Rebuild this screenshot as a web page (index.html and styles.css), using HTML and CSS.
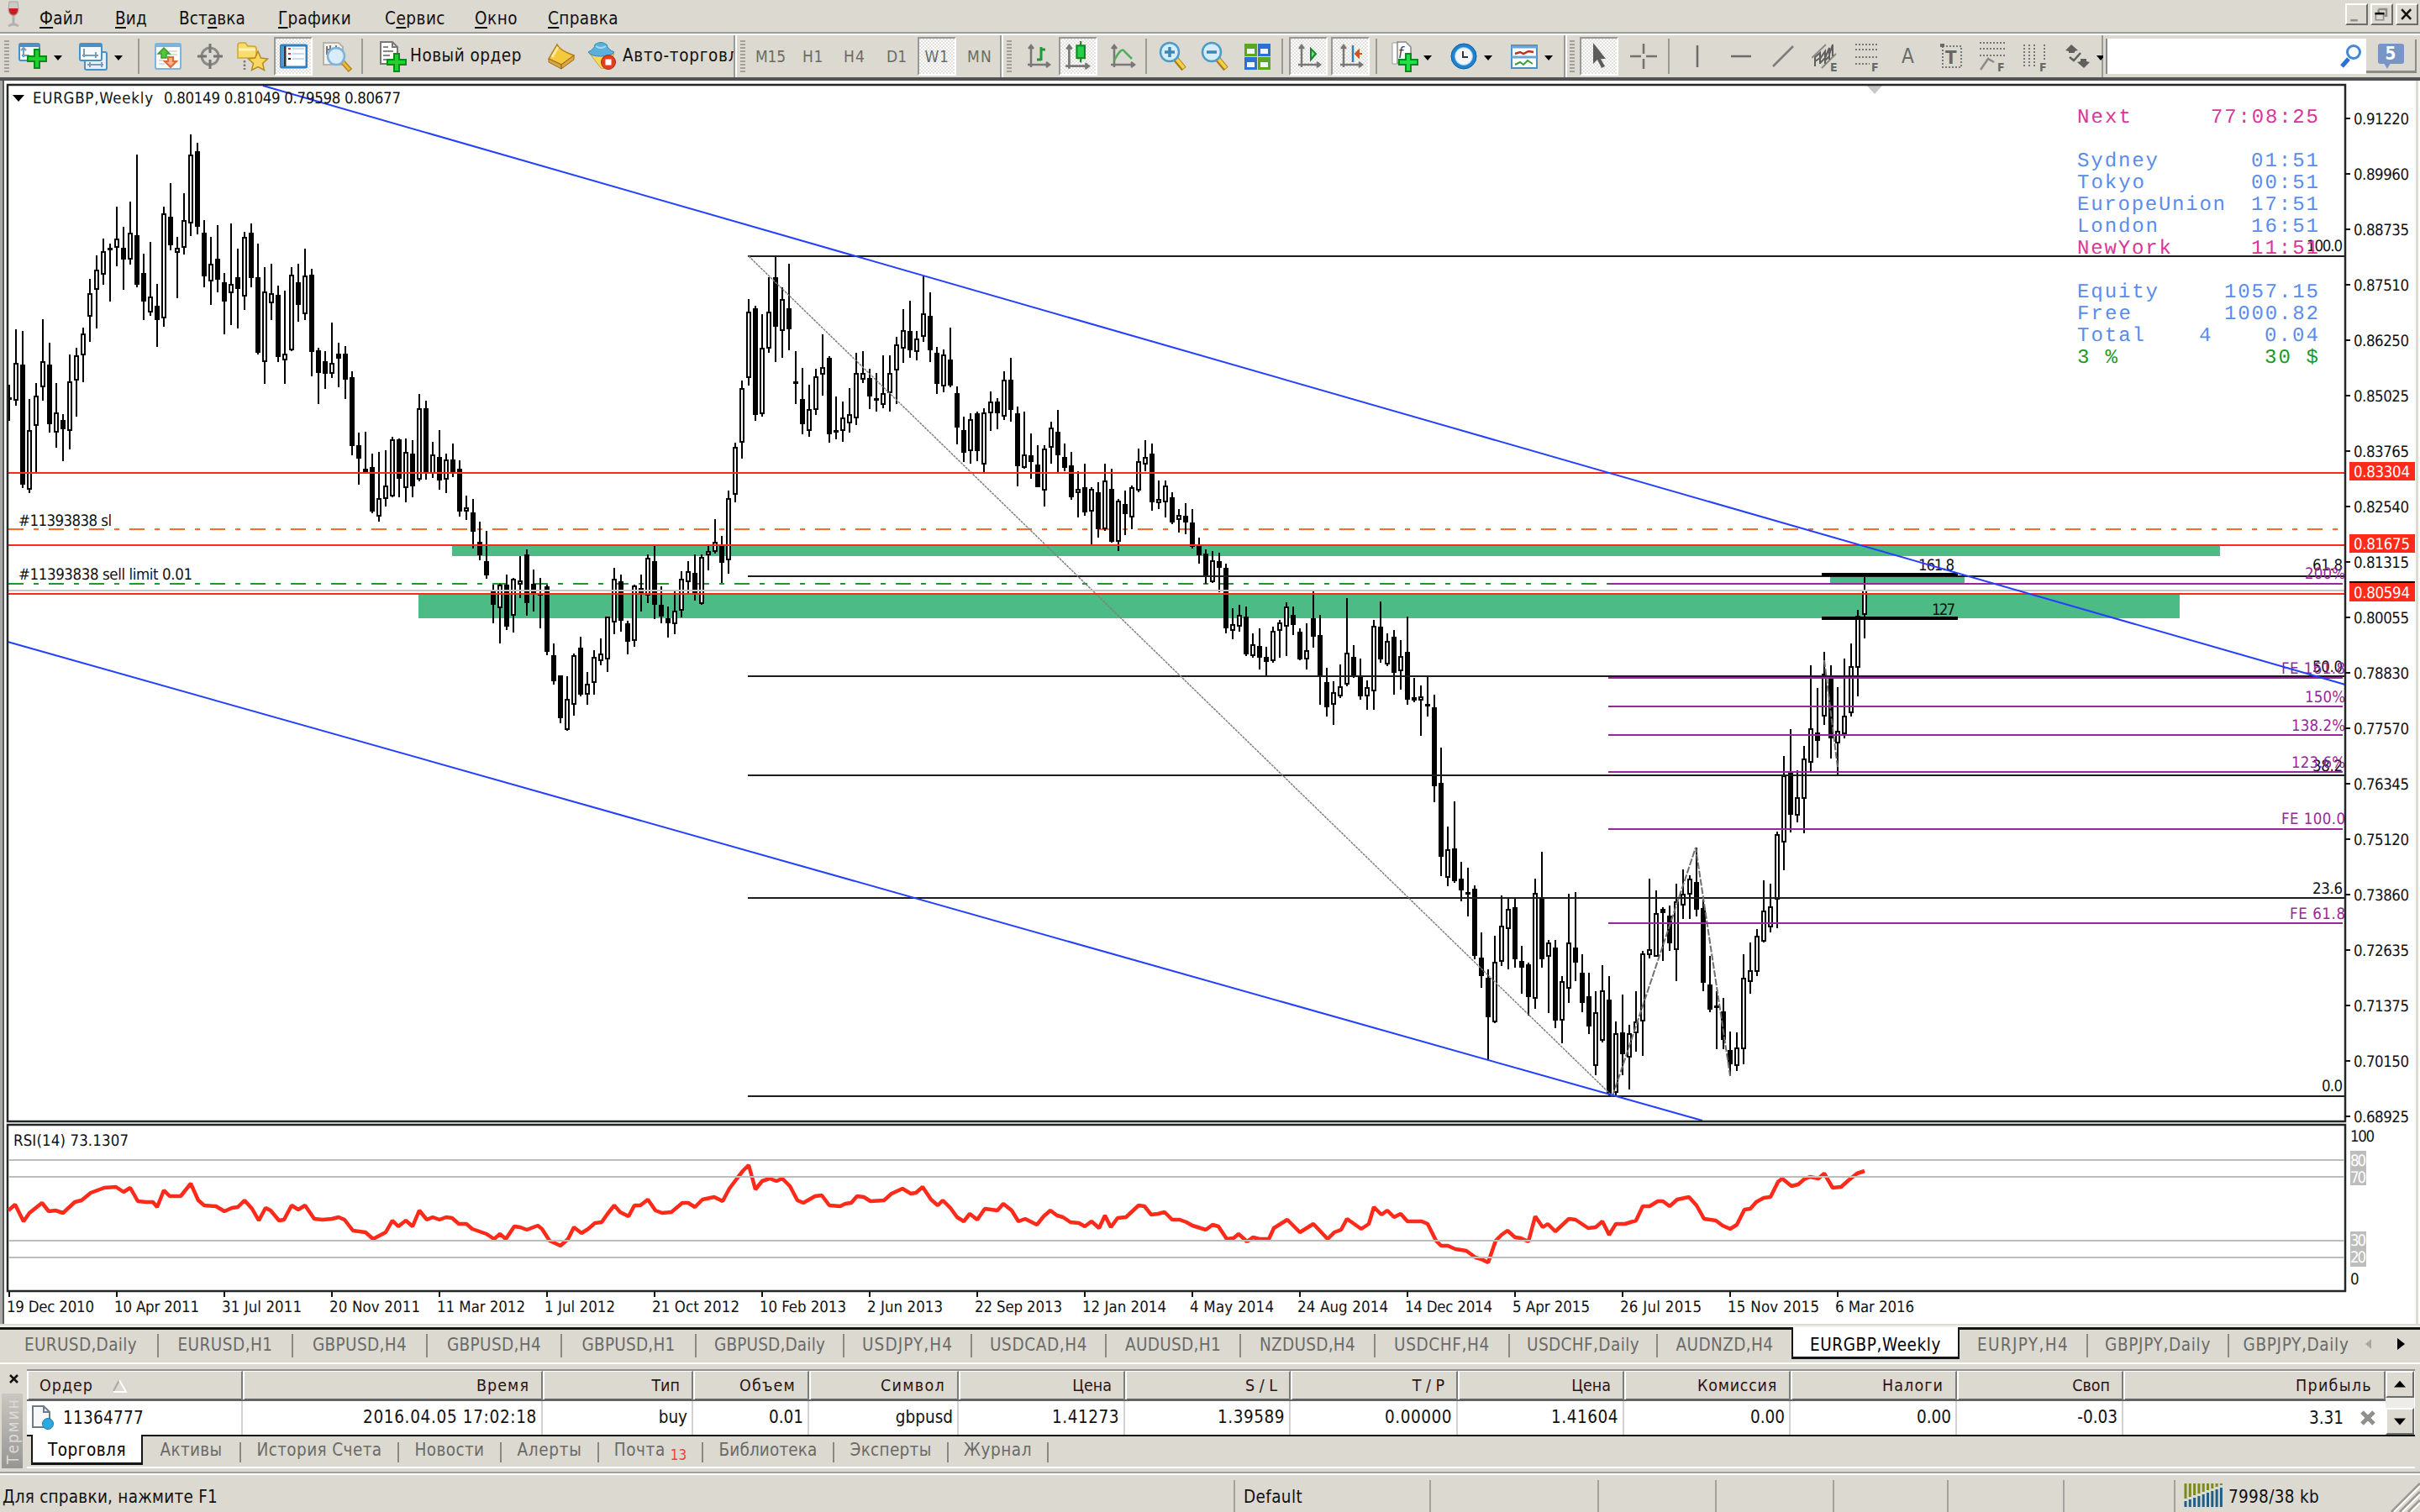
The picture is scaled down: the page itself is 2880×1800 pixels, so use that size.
FILE: index.html
```html
<!DOCTYPE html>
<html lang="ru">
<head>
  <meta charset="UTF-8" />
  <title>EURGBP,Weekly</title>
  <link rel="stylesheet" href="styles.css">
</head>
<body>

  <!-- Меню -->
  <div class="menubar">
    <svg class="logo" viewBox="0 0 20 34"><path d="M4 2h10l1 9q0 7-6 8q-6-1-6-8z" fill="#c9c9c7" stroke="#a5a5a3"/><path d="M3.500 10h11q0 7-5.500 8q-5.500-1-5.500-8z" fill="#c81e1e"/><path d="M9 19v10M3 31q6-4 12 0" stroke="#b0b0ae" stroke-width="3" fill="none"/></svg>
    <div class="menu">
      <span data-w="52"><u>Ф</u>айл</span>
      <span data-w="38"><u>В</u>ид</span>
      <span data-w="79">Вст<u>а</u>вка</span>
      <span data-w="87"><u>Г</u>рафики</span>
      <span data-w="72">С<u>е</u>рвис</span>
      <span data-w="51"><u>О</u>кно</span>
      <span data-w="84"><u>С</u>правка</span>
    </div>
    <div class="winbtns">
      <svg viewBox="0 0 27 26"><path d="M5 20h10v3H5z" fill="#8d8d8a"/></svg>
      <svg viewBox="0 0 27 26"><path d="M9 6h11v9h-3M9 6v5" fill="none" stroke="#8d8d8a" stroke-width="3"/><path d="M5 12h11v9H5z" fill="none" stroke="#8d8d8a" stroke-width="2"/><path d="M4 12h13" stroke="#000" stroke-width="3"/></svg>
      <svg viewBox="0 0 27 26"><path d="M6 6l13 14M19 6L6 20" stroke="#111" stroke-width="3"/></svg>
    </div>
  </div>

  <!-- Панели инструментов -->
  <div class="toolbars">
    <div class="tb tb-standard">
      <i class="grip"></i>
      <svg width="36" height="36" viewBox="0 0 36 36"><rect x="1" y="3" width="24" height="20" rx="2" fill="#f4f9fd" stroke="#4a8fc6" stroke-width="2"/><path d="M1 5h24" stroke="#4a8fc6" stroke-width="4"/><path d="M6 9v10M3 11l3-3 3 3M4 17h9" stroke="#7a9cb8" stroke-width="2" fill="none"/><path d="M19 10h6v8h8v6h-8v8h-6v-8h-8v-6h8z" fill="#1fd02f" stroke="#0a8c1a" stroke-width="2"/></svg>
      <i class="caret"></i>
      <svg width="36" height="36" viewBox="0 0 36 36"><rect x="7" y="13" width="26" height="21" rx="2" fill="#e6f0f8" stroke="#4a8fc6" stroke-width="2"/><rect x="1" y="3" width="26" height="20" rx="2" fill="#f6fafd" stroke="#4a8fc6" stroke-width="2"/><path d="M1 5h26" stroke="#4a8fc6" stroke-width="4"/><path d="M6 9v10M4 17h19M20 13v7M10 28h19M13 25v6M27 25v6" stroke="#7a9cb8" stroke-width="2"/></svg>
      <i class="caret"></i>
      <i class="sep"></i>
      <svg width="33" height="36" viewBox="0 0 33 36"><rect x="1" y="3" width="30" height="30" rx="2" fill="#fdfdfd" stroke="#79b4e2" stroke-width="2"/><path d="M1 5h30" stroke="#79b4e2" stroke-width="4"/><path d="M17 12h10M17 16h10M5 27h7M5 23h7" stroke="#ddd" stroke-width="2"/><path d="M11 8l7 7h-4v5H8v-5H4z" fill="#55c43c" stroke="#3a9a28" stroke-width="1.500"/><path d="M19 31l7-7h-4v-5h-6v5h-4z" fill="#fbb08c" stroke="#dd6a3a" stroke-width="2"/></svg>
      <svg width="33" height="36" viewBox="0 0 33 36"><circle cx="15" cy="18" r="10" fill="none" stroke="#8a8a88" stroke-width="3"/><path d="M15 3v11M15 22v11M0 18h11M19 18h11" stroke="#757573" stroke-width="3"/></svg>
      <svg width="38" height="38" viewBox="0 0 38 38"><path d="M1 6q0-3 3-3h6l3 4h7q3 0 3 3v11H1z" fill="#f7dc6e" stroke="#cfa52a" stroke-width="1.500"/><path d="M2 11h20" stroke="#fff3b5" stroke-width="3"/><path d="M9 24v11" stroke="#777" stroke-width="2.500" stroke-dasharray="2.500 2"/><path d="M25 13l3.500 8 8 1-6 5.500 2 8-7.500-4-7.500 4 2-8-6-5.500 8-1z" fill="#f8d860" stroke="#b98a1c" stroke-width="1.500"/></svg>
      <span class="pressed"><svg width="33" height="36" viewBox="0 0 33 36"><rect x="1" y="5" width="31" height="26" rx="2" fill="#fff" stroke="#2a82c8" stroke-width="3"/><path d="M6 6v24" stroke="#333" stroke-width="3"/><path d="M3 6v24" stroke="#4a9ad8" stroke-width="3"/><path d="M10 9h3M10 15h3" stroke="#e33" stroke-width="2"/><path d="M10 21h3" stroke="#111" stroke-width="2"/><path d="M15 9h14M15 15h14M15 21h14" stroke="#c8dcf8" stroke-width="2"/></svg></span>
      <svg width="38" height="40" viewBox="0 0 38 40"><path d="M2 4h18l5 5v21H2z" fill="#f3f2ee" stroke="#b5b3aa" stroke-width="2"/><path d="M6 8v10M10 7v8M17 7v6M5 12h4M17 10h4" stroke="#777" stroke-width="2"/><path d="M25 27l9 10" stroke="#b8841a" stroke-width="6"/><path d="M25 27l8 9" stroke="#e8b83a" stroke-width="3"/><circle cx="17" cy="20" r="10" fill="#d5ebfa" fill-opacity=".9" stroke="#7fb2d8" stroke-width="2.500"/></svg>
      <i class="sep"></i>
      <svg width="37" height="40" viewBox="0 0 37 40"><path d="M2 3h14l6 6v20H2z" fill="#fff" stroke="#777" stroke-width="2"/><path d="M16 3v6h6" fill="none" stroke="#777" stroke-width="2"/><path d="M5 9h6M5 14h12M5 19h8M5 24h5" stroke="#888" stroke-width="2"/><path d="M18 17h6v7h8v6h-8v8h-6v-8h-8v-6h8z" fill="#1fd02f" stroke="#0a8c1a" stroke-width="2"/></svg>
      <span class="tb-text" data-w="133">Новый ордер</span>
      <svg width="36" height="36" viewBox="0 0 36 36"><path d="M2 21L12 4q3 7 20 13L17 28z" fill="#f4c93c" stroke="#b4811a" stroke-width="1.500"/><path d="M2 21l15 7v5L2 25zM17 28l15-11v5L17 33z" fill="#d9a548" stroke="#a06c1a"/><path d="M13 7L6 19" stroke="#fde9a8" stroke-width="3"/></svg>
      <svg width="36" height="38" viewBox="0 0 36 38"><path d="M3 16h29l-10 17q-4 1-6 0z" fill="#f5d95a" stroke="#c2a03a"/><path d="M1 14q8-4 8-9q7-5 14 0q1 6 9 9q-3 5-16 5q-12 0-15-5z" fill="#5bb1dc" stroke="#2f86b4"/><path d="M10 7q6 4 12 0" stroke="#a6dbf2" stroke-width="2" fill="none"/><circle cx="25" cy="26" r="8.500" fill="#e2401e" stroke="#b52312"/><rect x="21.500" y="22.500" width="7" height="7" fill="#fff"/></svg>
      <span class="tb-text" data-w="150">Авто-торговля</span>
    </div>

    <div class="tb tb-periods">
      <i class="grip"></i>
      <span class="tf" data-w="36">M15</span>
      <span class="tf" data-w="25">H1</span>
      <span class="tf" data-w="26">H4</span>
      <span class="tf" data-w="24">D1</span>
      <span class="pressed"><span class="tf" data-w="29">W1</span></span>
      <span class="tf" data-w="30">MN</span>
    </div>

    <div class="tb tb-charts">
      <i class="grip"></i>
      <svg width="28" height="32" viewBox="0 0 28 32"><path d="M4 3v26M0 26h26M1 7l3-4 3 4M22 23l4 3-4 3" stroke="#777" stroke-width="2.500" fill="none"/><path d="M16 5v16M11 20h5M16 8h5" stroke="#1c9a34" stroke-width="3"/></svg>
      <span class="pressed"><svg width="30" height="36" viewBox="0 0 28 34"><path d="M4 5v26M0 28h26M1 9l3-4 3 4M22 25l4 3-4 3" stroke="#777" stroke-width="2.500" fill="none"/><path d="M17 0v24" stroke="#0d8a22" stroke-width="2"/><rect x="12.500" y="5" width="9" height="14" fill="#27cf4b" stroke="#0d8a22" stroke-width="2"/></svg></span>
      <svg width="30" height="32" viewBox="0 0 30 32"><path d="M4 3v26M0 26h28M1 7l3-4 3 4M24 23l4 3-4 3" stroke="#777" stroke-width="2.500" fill="none"/><path d="M4 21Q13 4 16 10l9 9" stroke="#52ae5c" stroke-width="2.500" fill="none"/></svg>
      <i class="sep"></i>
      <svg width="36" height="36" viewBox="0 0 36 36"><path d="M20 21l10 12" stroke="#a87a18" stroke-width="7"/><path d="M20 20l10 12" stroke="#f3d046" stroke-width="4"/><circle cx="13" cy="13" r="11" fill="#d3edfb" stroke="#4d9bcb" stroke-width="2.500"/><path d="M7 13h12M13 7v12" stroke="#3f86b4" stroke-width="3.500"/></svg>
      <svg width="36" height="36" viewBox="0 0 36 36"><path d="M20 21l10 12" stroke="#a87a18" stroke-width="7"/><path d="M20 20l10 12" stroke="#f3d046" stroke-width="4"/><circle cx="13" cy="13" r="11" fill="#d3edfb" stroke="#4d9bcb" stroke-width="2.500"/><path d="M7 13h12" stroke="#3f86b4" stroke-width="3.500"/></svg>
      <svg width="34" height="34" viewBox="0 0 34 34"><path d="M1 2h15v15H1zM17 18h15v15H17z" fill="#5aa81e"/><path d="M17 2h15v15H17zM1 18h15v15H1z" fill="#2d6fd8"/><path d="M4 8h9v6H4zM20 8h9v6h-9zM4 24h9v6H4zM20 24h9v6h-9z" fill="#eef5fb"/></svg>
      <i class="sep"></i>
      <span class="pressed"><svg class="shift" width="30" height="32" viewBox="0 0 28 32"><path d="M4 3v26M0 26h26M1 7l3-4 3 4M22 23l4 3-4 3" stroke="#777" stroke-width="2.500" fill="none"/><path d="M15 7l6 6-6 7z" fill="#6fdc86" stroke="#128a2a" stroke-width="2"/></svg></span>
      <span class="pressed"><svg class="shift" width="30" height="32" viewBox="0 0 28 32"><path d="M4 3v26M0 26h26M1 7l3-4 3 4M22 23l4 3-4 3" stroke="#777" stroke-width="2.500" fill="none"/><path d="M15 3v20" stroke="#2e80b8" stroke-width="2.500"/><path d="M26 13h-7M22 9l-4 4 4 4z" fill="#d6511a" stroke="#d6511a" stroke-width="2"/></svg></span>
      <i class="sep"></i>
      <svg width="36" height="40" viewBox="0 0 36 40"><path d="M1 4h14v25H1z" fill="#fff" stroke="#999"/><path d="M7 3h10l6 6v19H7z" fill="#fff" stroke="#888" stroke-width="1.500"/><text x="8" y="22" font-size="18" font-style="italic" fill="#444">f</text><path d="M17 17h6v7h8v6h-8v8h-6v-8h-8v-6h8z" fill="#1fe04a" stroke="#0a8c1a" stroke-width="2"/></svg>
      <i class="caret"></i>
      <svg width="34" height="36" viewBox="0 0 34 36"><circle cx="16" cy="18" r="15" fill="#1d83d2" stroke="#0f5a9c"/><circle cx="16" cy="18" r="10.500" fill="#f2f6fa" stroke="#9cc8ea"/><path d="M15 12v7h6" stroke="#333" stroke-width="2" fill="none"/></svg>
      <i class="caret"></i>
      <svg width="34" height="34" viewBox="0 0 34 34"><rect x="1" y="4" width="30" height="27" fill="#fff" stroke="#4a8fc6" stroke-width="2"/><path d="M1 6h30M1 18h30" stroke="#6ba6d6" stroke-width="3"/><path d="M5 14l6-2 4 2 6-3 6 1" stroke="#b5361a" stroke-width="2.500" fill="none"/><path d="M5 27l6-3 4 3 5-5 6 4" stroke="#3aa03c" stroke-width="2" fill="none"/></svg>
      <i class="caret"></i>
    </div>

    <div class="tb tb-lines">
      <i class="grip"></i>
      <span class="pressed"><svg width="24" height="34" viewBox="0 0 24 34"><path d="M5 1v25l5-5 5 10 4-2-5-9h6z" fill="#5c5c5a"/></svg></span>
      <svg width="32" height="34" viewBox="0 0 32 34"><path d="M16 2v12M16 20v12M0 17h13M19 17h13" stroke="#72726f" stroke-width="2.500"/></svg>
      <i class="sep"></i>
      <svg width="20" height="30" viewBox="0 0 20 30"><path d="M10 2v26" stroke="#6a6a68" stroke-width="2.500"/></svg>
      <svg width="26" height="30" viewBox="0 0 26 30"><path d="M0 15h24" stroke="#6a6a68" stroke-width="2.500"/></svg>
      <svg width="26" height="30" viewBox="0 0 26 30"><path d="M1 27L25 3" stroke="#7c7c7a" stroke-width="2.500"/></svg>
      <svg class="letter" width="32" height="38" viewBox="0 0 32 38"><path d="M0 21L17 5M12 33L29 16" stroke="#8a8a88" stroke-width="2"/><path d="M4 31V20l6-5v13M10 22l6-9v15M16 21l5-12v14M21 17l4-12v14M4 25l6-4M10 27l6-6M16 24l5-5" stroke="#5f5f5d" stroke-width="2" fill="none"/><text x="22" y="37">E</text></svg>
      <svg class="letter" width="32" height="38" viewBox="0 0 32 38"><path d="M1 5h27M1 11h27M1 20h27M1 28h17" stroke="#777775" stroke-width="2" stroke-dasharray="2 2"/><text x="20" y="37">F</text></svg>
      <span class="glyph">A</span>
      <svg class="letter" width="28" height="32" viewBox="0 0 28 32"><rect x="3" y="4" width="22" height="25" fill="none" stroke="#777775" stroke-width="2" stroke-dasharray="2 2"/><text x="6" y="25" class="big">T</text><path d="M0 1h5v4H0z" fill="#686866"/></svg>
      <svg class="letter" width="32" height="38" viewBox="0 0 32 38"><path d="M0 3h31M0 10h31M0 18h31" stroke="#777775" stroke-width="2" stroke-dasharray="2 2"/><path d="M1 35L10 22l7 4" stroke="#8a8a88" stroke-width="2.500" fill="none"/><text x="21" y="37">F</text></svg>
      <svg class="letter" width="32" height="38" viewBox="0 0 32 38"><path d="M2 5v26M8 5v26M14 5v26M26 5v20" stroke="#777775" stroke-width="2" stroke-dasharray="2 2"/><text x="20" y="37">F</text></svg>
      <svg width="32" height="34" viewBox="0 0 32 34"><path d="M7 3l8 7-4 1v2H4v-2l-4-1zM22 31l-8-7 4-1v-3h7v3l4 1z" fill="#5f5f5d"/><path d="M5 18l5 4 8-9" stroke="#5f5f5d" stroke-width="2.500" fill="none"/></svg>
      <i class="caret"></i>
    </div>

    <div class="search">
      <div class="search-box"><svg width="28" height="30" viewBox="0 0 28 30"><path d="M11 18L3 27" stroke="#2b6fd0" stroke-width="5"/><circle cx="17" cy="10" r="7.500" fill="#fff" stroke="#4287dd" stroke-width="3"/></svg></div>
      <div class="chat-btn"><span class="bubble">5</span></div>
    </div>
  </div>

  <!-- График -->
  <svg id="chart" class="chart" viewBox="0 96 2880 1482" text-rendering="geometricPrecision"></svg>

  <!-- Вкладки графиков -->
  <div class="chart-tabs">
    <span><b data-w="134">EURUSD,Daily</b></span>
    <span><b data-w="113">EURUSD,H1</b></span>
    <span><b data-w="112">GBPUSD,H4</b></span>
    <span><b data-w="112">GBPUSD,H4</b></span>
    <span><b data-w="111">GBPUSD,H1</b></span>
    <span><b data-w="132">GBPUSD,Daily</b></span>
    <span><b data-w="108">USDJPY,H4</b></span>
    <span><b data-w="116">USDCAD,H4</b></span>
    <span><b data-w="114">AUDUSD,H1</b></span>
    <span><b data-w="114">NZDUSD,H4</b></span>
    <span><b data-w="114">USDCHF,H4</b></span>
    <span><b data-w="134">USDCHF,Daily</b></span>
    <span class="last"><b data-w="116">AUDNZD,H4</b></span>
    <span class="active"><b data-w="156">EURGBP,Weekly</b></span>
    <span><b data-w="109">EURJPY,H4</b></span>
    <span><b data-w="126">GBPJPY,Daily</b></span>
    <span class="last"><b data-w="126">GBPJPY,Daily</b></span>
    <svg width="60" height="20" viewBox="0 0 60 20"><path d="M10 4v12l-7-6z" fill="#a9a7a0"/><path d="M41 3v14l9-7z" fill="#000"/></svg>
  </div>

  <!-- Терминал -->
  <div class="terminal">
    <div class="side">
      <svg width="12" height="12" viewBox="0 0 12 12"><path d="M1 1l9 9M10 1l-9 9" stroke="#111" stroke-width="2.500"/></svg>
      <div class="side-title"><span>Термин</span></div>
    </div>
    <div class="term-main">
      <div class="table">
        <div class="thead">
          <span class="left"><b data-w="64">Ордер</b> <svg width="20" height="18" viewBox="0 0 20 18"><path d="M8 2L1 15" stroke="#aaa8a0" stroke-width="2"/><path d="M8 2l8 14H1" fill="none" stroke="#fff" stroke-width="2"/></svg></span>
          <span data-w="63">Время</span><span>Тип</span><span data-w="67">Объем</span><span data-w="77">Символ</span><span>Цена</span><span>S / L</span><span>T / P</span><span>Цена</span><span data-w="95">Комиссия</span><span data-w="73">Налоги</span><span>Своп</span><span data-w="91">Прибыль</span>
        </div>
        <div class="trow">
          <span class="left"><svg width="32" height="32" viewBox="0 0 32 32"><path d="M2 2h13l7 7v18H2z" fill="#f8f8f8" stroke="#6c7c8a" stroke-width="2"/><path d="M15 2v7h7" fill="none" stroke="#6c7c8a" stroke-width="2"/><circle cx="20" cy="23" r="6.500" fill="#29a9e0" stroke="#1b7eac"/></svg><b data-w="96">11364777</b></span>
          <span data-w="207">2016.04.05 17:02:18</span><span>buy</span><span>0.01</span><span>gbpusd</span><span data-w="80">1.41273</span><span data-w="80">1.39589</span><span data-w="80">0.00000</span><span data-w="80">1.41604</span><span>0.00</span><span>0.00</span><span>-0.03</span>
          <span class="profit">3.31 <svg width="18" height="18" viewBox="0 0 18 18"><path d="M2 2l14 14M16 2L2 16" stroke="#8f8f8d" stroke-width="5"/></svg></span>
        </div>
        <div class="scroll">
          <svg viewBox="0 0 34 32"><path d="M9 20l8-9 8 9z"/></svg>
          <svg viewBox="0 0 34 32"><path d="M9 12l8 9 8-9z"/></svg>
        </div>
      </div>
      <div class="term-tabs">
        <span class="active"><b data-w="93">Торговля</b></span>
        <span><b data-w="74">Активы</b></span>
        <span><b data-w="149">История Счета</b></span>
        <span><b data-w="83">Новости</b></span>
        <span><b data-w="77">Алерты</b></span>
        <span><b data-w="61">Почта</b><sub>13</sub></span>
        <span><b data-w="117">Библиотека</b></span>
        <span><b data-w="97">Эксперты</b></span>
        <span><b data-w="81">Журнал</b></span>
      </div>
    </div>
  </div>

  <!-- Строка состояния -->
  <div class="statusbar">
    <span data-w="256">Для справки, нажмите F1</span>
    <span data-w="70">Default</span>
    <span></span><span></span><span></span><span></span><span></span><span></span>
    <span class="net"><svg id="net" width="48" height="28" viewBox="0 0 48 28"></svg><b data-w="108">7998/38 kb</b></span>
    <svg class="corner" width="36" height="36" viewBox="0 0 36 36"><path d="M2 36L36 2M12 36L36 12M22 36L36 22" stroke="#9b9993" stroke-width="3"/><path d="M5 36L36 5M15 36L36 15M25 36L36 25" stroke="#fff" stroke-width="2"/></svg>
  </div>

<script src="chart.js"></script>
</body>
</html>
```

FILE: styles.css
```css
body {
  margin: 0;
  width: 2880px;
  height: 1800px;
  overflow: hidden;
  background: #dcd9d1;
  font-family: "DejaVu Sans Condensed", "DejaVu Sans", sans-serif;
  font-stretch: condensed;
  font-size: 20.5px;
  color: #111;
  display: flex;
  flex-direction: column;
}
* {
  box-sizing: border-box;
}
svg {
  display: block;
  flex: none;
}
span, b {
  white-space: nowrap;
}
b {
  font-weight: normal;
}

/* Меню */
.menubar {
  height: 42px;
  flex: none;
  display: flex;
  border-bottom: 2px solid #fff;
  box-shadow: inset 0 -2px #9c9c99;
}
.logo {
  width: 20px;
  height: 34px;
  margin-left: 7px;
}
.menu {
  flex: 1;
  display: grid;
  grid-template-columns: 90px 76px 118px 127px 107px 87px 90px;
  padding-left: 20px;
  line-height: 45px;
}
.menu span {
  justify-self: start;
}
.menu u {
  text-underline-offset: 3px;
  text-decoration-thickness: 2px;
}
.winbtns {
  display: flex;
  gap: 3px;
  padding: 4px 2px 0 0;
}
.winbtns svg {
  width: 27px;
  height: 26px;
  border: 2px solid;
  border-color: #fff #6b6b69 #6b6b69 #fff;
}

/* Панели инструментов */
.toolbars {
  height: 54px;
  flex: none;
  display: flex;
  border-bottom: 4px solid #5d5d5b;
  border-image: linear-gradient(#9c9c99, #505050) 4;
}
.tb {
  display: grid;
  align-items: center;
  justify-items: start;
  overflow: hidden;
  border-left: 2px solid #fff;
  box-shadow: inset -2px 0 #9a9a97;
}
.tb-standard {
  width: 875px;
  border-left: 0;
  padding-left: 5px;
  grid-template-columns: 17px 42px 30px 42px 28px 20px 51px 47px 44px 57px 47px 21px 37px 163px 48px 42px 130px;
}
.tb-standard .tb-text:last-child {
  width: 132px;
  overflow: hidden;
}
.tb-periods {
  width: 317px;
  padding-left: 4px;
  grid-template-columns: 18px 56px 49px 51px 37px 59px 38px;
}
.tb-charts {
  width: 671px;
  padding-left: 4px;
  grid-template-columns: 25px 37px 62px 41px 16px 50px 51px 45px 9px 50px 53px 19px 38px 32px 40px 32px 40px 20px;
}
.tb-lines {
  width: 640px;
  padding-left: 3px;
  grid-template-columns: 12px 60px 45px 25px 50px 49px 47px 51px 56px 46px 47px 51px 51px 37px 6px;
}
.tb-text {
  padding-bottom: 2px;
}
.tf {
  font-size: 19px;
  color: #6b6b69;
}
.grip {
  width: 6px;
  height: 38px;
  background: repeating-linear-gradient(#a09f9a 0 2px, #dcd9d1 2px 4px);
}
.sep {
  width: 2px;
  height: 42px;
  background: #9a9a97;
}
.caret {
  border: 5px solid transparent;
  border-top: 6px solid #000;
  border-bottom: 0;
  margin-top: 4px;
}
.pressed {
  width: 46px;
  height: 46px;
  display: flex;
  align-items: center;
  justify-content: center;
  border: 2px solid;
  border-color: #989896 #fff #fff #989896;
  background: repeating-conic-gradient(#fff 0 25%, #e3e1db 0 50%) 0 0 / 4px 4px;
}
.shift {
  margin-left: 4px;
}
.letter text {
  font-size: 14px;
  font-weight: bold;
  fill: #686866;
}
.letter .big {
  font-size: 22px;
}
.glyph {
  font-size: 24px;
  color: #686866;
}
.search {
  flex: 1;
  display: flex;
  align-items: center;
  padding: 0 4px 0 3px;
}
.search-box {
  width: 310px;
  height: 42px;
  background: #fff;
  border-left: 2px solid #8b8b88;
  display: flex;
  align-items: center;
  justify-content: flex-end;
  padding-right: 4px;
}
.chat-btn {
  width: 60px;
  height: 40px;
  border-right: 2px solid #8b8b88;
  border-bottom: 3px solid #8b8b88;
  display: flex;
  justify-content: center;
  padding-top: 5px;
}
.bubble {
  width: 31px;
  height: 24px;
  border-radius: 3px;
  background: #7796c6;
  color: #fff;
  font-weight: bold;
  line-height: 24px;
  text-align: center;
  position: relative;
}
.bubble::after {
  content: "";
  position: absolute;
  left: 7px;
  top: 23px;
  border: 4px solid transparent;
  border-top: 7px solid #7796c6;
  border-bottom: 0;
}

/* График */
.chart {
  width: 2880px;
  height: 1482px;
  font-size: 18.5px;
}
.info {
  font-family: "Liberation Mono", monospace;
  font-size: 24px;
}

/* Вкладки графиков */
.chart-tabs {
  height: 46px;
  flex: none;
  display: grid;
  grid-template-columns: 184px 160px 160px 160px 160px 176px 152px 160px 160px 160px 160px 176px 159px 200px 153px 168px 159px 60px;
  padding-left: 5px;
  align-items: start;
  border-top: 2px solid #f2f0ea;
  border-bottom: 2px solid #fff;
  box-shadow: inset 0 3px #141616;
  color: #6a6a68;
}
.chart-tabs span {
  height: 28px;
  margin-top: 8px;
  line-height: 27px;
  text-align: center;
  border-right: 2px solid #888885;
}
.chart-tabs span.last {
  border-right: 0;
}
.chart-tabs span.active {
  height: 38px;
  margin-top: 0;
  line-height: 43px;
  background: #fff;
  color: #000;
  border: 2px solid #141616;
  border-top: 0;
  border-bottom-width: 3px;
}
.chart-tabs > svg {
  margin-top: 10px;
}

/* Терминал */
.terminal {
  height: 124px;
  flex: none;
  display: flex;
}
.side {
  width: 30px;
  display: flex;
  flex-direction: column;
  gap: 11px;
  padding: 12px 0 0 2px;
}
.side > svg {
  margin-left: 9px;
}
.side-title {
  width: 25px;
  height: 89px;
  background: linear-gradient(#c9c7c1, #969694);
  display: flex;
  align-items: center;
  justify-content: center;
}
.side-title span {
  writing-mode: vertical-rl;
  transform: rotate(180deg);
  letter-spacing: 2px;
  color: #dddbd5;
  font-size: 19px;
}
.term-main {
  flex: 1;
  margin: 6px 6px 0 2px;
  border-bottom: 2px solid #fff;
}
.table {
  height: 76px;
  box-sizing: content-box;
  display: grid;
  grid-template-columns: 2807px 34px;
  grid-template-rows: 36px 40px;
  border-top: 2px solid #8e9092;
  border-bottom: 2px solid #111;
  background: #fff;
}
.thead, .trow {
  display: grid;
  grid-template-columns: 257px 357px 179px 138px 178px 198px 197px 199px 198px 198px 198px 198px 312px;
  grid-column: 1;
}
.thead {
  background: #dcd9d1;
  border-bottom: 3px solid #636361;
  color: #2a1414;
}
.thead span {
  text-align: right;
  padding-right: 14px;
  line-height: 33px;
  font-size: 19.5px;
  border-left: 2px solid #fff;
  border-top: 1px solid #fff;
  border-right: 2px solid #7b7b78;
}
.thead .left {
  display: flex;
  align-items: center;
  gap: 23px;
  padding-left: 13px;
}
.trow span {
  text-align: right;
  padding-right: 5px;
  line-height: 39px;
  border-right: 2px solid #d2d2d0;
}
.trow .left {
  display: flex;
  align-items: center;
  gap: 6px;
  padding-left: 5px;
}
.trow .profit {
  display: flex;
  align-items: center;
  justify-content: flex-end;
  gap: 20px;
  padding-right: 12px;
  border: 0;
}
.scroll {
  grid-column: 2;
  grid-row: 1 / 3;
  display: flex;
  flex-direction: column;
  justify-content: space-between;
  background: #eeece8;
}
.scroll svg {
  width: 34px;
  height: 32px;
  background: #dcd9d1;
  border: 2px solid;
  border-color: #fff #6b6b69 #6b6b69 #fff;
}
.term-tabs {
  height: 38px;
  display: grid;
  grid-template-columns: 133px 117px 188px 122px 116px 124px 156px 136px 119px;
  padding-left: 5px;
  align-items: start;
  color: #6a6a68;
}
.term-tabs span {
  height: 24px;
  margin-top: 7px;
  line-height: 18px;
  text-align: center;
  border-right: 2px solid #888885;
}
.term-tabs .active {
  height: 36px;
  margin-top: -2px;
  line-height: 36px;
  background: #fff;
  color: #000;
  border: 2px solid #141616;
  border-top: 0;
  border-bottom-width: 3px;
}
.term-tabs sub {
  color: #f04040;
  font-size: 17px;
  line-height: 0;
  margin-left: 6px;
}

/* Строка состояния */
.statusbar {
  height: 48px;
  flex: none;
  margin-top: 4px;
  display: grid;
  grid-template-columns: 1468px 233px 200px 140px 140px 136px 138px 132px 257px 36px;
  border-top: 2px solid #a1a19e;
  box-shadow: inset 0 2px #fff;
  padding-top: 8px;
}
.statusbar > span {
  line-height: 41px;
  padding-left: 10px;
  border-left: 2px solid #a1a19e;
}
.statusbar > span:first-child {
  padding-left: 3px;
  border: 0;
}
.statusbar > .net {
  display: flex;
  gap: 5px;
}
.net svg {
  margin-top: 4px;
}
.corner {
  margin-top: 2px;
}
```

FILE: chart.js
```js
const chart = document.getElementById("chart");
const NS = "http://www.w3.org/2000/svg";

function add(name, attrs, text) {
  const el = document.createElementNS(NS, name);
  for (const k in attrs) el.setAttribute(k, attrs[k]);
  if (text !== undefined) el.textContent = text;
  chart.appendChild(el);
  return el;
}
function rect(x, y, w, h, fill) {
  add("rect", { x, y, width: w, height: h, fill });
}
function line(x1, y1, x2, y2, stroke, w = 2, extra = {}) {
  add("line", { x1, y1, x2, y2, stroke, "stroke-width": w, ...extra });
}
// len > 0: the text is stretched to this width
function label(x, y, text, fill = "#111", len = 0, anchor = "start") {
  const a = { x, y, fill, "text-anchor": anchor };
  if (len) a.textLength = len;
  add("text", a, text);
}

// Bars: high, body top, body bottom, low, direction (u/d)
const segments = [
  { top: 90, scale: 1.96, bars: `722 750 755 806 d|592 671 758 770 u|596 675 955 962 d|754 828 966 974 u|718 746 817 926 u|568 667 727 758 u|623 675 813 833 d|718 785 833 868 u|789 804 826 900 d|651 714 829 873 u|635 653 711 795 u|588 601 653 715 u|474 507 563 622 u|420 452 500 590 u|380 409 464 488 u|392 401 405 527 d|306 381 402 445 u|353 401 430 500 d|294 366 430 441 u|184 372 489 493 d|416 460 528 571 d|388 515 552 560 u|487 538 571 633 d|306 322 567 586 u|251 329 395 407 d|377 402 414 519 u|275 338 402 418 u|137 184 344 375 u|156 177 352 370 d|337 366 469 493 d|376 440 480 535 u|349 428 477 505 d|460 483 528 603 d|345 487 508 583 u|404 471 497 590 d|365 377 516 547 u|345 366 473 493 d|392 471 646 650 d|447 503 668 719 u|440 507 532 571 u|490 511 657 669 d|502 648 664 719 u|447 464 641 643 u|440 483 536 575 d|404 467 556 571 u|450 464 645 701 d|635 640 693 767 d|643 667 696 732 d|576 671 696 705 u|623 648 661 727 d|631 648 709 755 d|690 703 864 885 d|833 863 893 955 d|831 917 925 927 d|882 913 1018 1022 d|878 985 1029 1041 u|874 957 987 1005 u|843 848 982 984 u|847 848 940 983 d|847 879 962 995 u|851 882 959 983 d|742 777 943 947 u|758 777 928 943 d|855 883 930 939 u|828 890 944 967 d|882 895 943 975 u|858 895 928 937 d|897 917 1018 1029 d|980 1008 1018 1037 u|988 1019 1065 1104 d|1040 1087 1119 1131 d|1062 1133 1167 1174 d|1187 1203 1234 1277 d|1185 1188 1242 1324 u|1164 1188 1285 1293 d|1172 1174 1260 1300 u|1121 1177 1187 1219 u|1105 1117 1230 1261 d|1152 1185 1209 1250 d|1172 1207 1214 1289 d|1187 1192 1344 1352 d|1325 1352 1413 1421 d|1399 1400 1500 1511 d|1402 1455 1527 1528 u|1348 1353 1468 1493 u|1309 1334 1445 1449 d|1391 1420 1445 1469 u|1341 1357 1417 1445 u|1314 1349 1366 1375 u|1262 1263 1362 1391 u|1149 1174 1276 1304 u|1164 1180 1273 1297 d|1272 1278 1321 1350 d|1188 1189 1320 1332 u|1164 1196 1207 1250 d|1117 1126 1213 1230 u|1097 1133 1234 1269 d|1192 1235 1262 1277 d|1238 1266 1277 1312 d|1199 1248 1280 1304 u|1156 1174 1248 1265 u|1133 1157 1182 1207 u|1117 1160 1209 1225 d|1118 1123 1233 1234 u|1097 1110 1119 1155 u|1035 1087 1112 1116 u|1074 1098 1136 1184 d|968 985 1131 1163 u|856 867 979 995 u|711 730 857 893 u|521 550 705 723 u|538 542 791 806 d|557 636 790 795 u|470 550 637 646 u|420 470 587 669 d|494 522 595 658 u|439 542 591 641 d|643 714 719 767 d|683 754 814 837 d` },
  { top: 280, scale: 1.5077, bars: `269 312 352 362 u|240 254 313 322 u|178 236 251 288 u|217 220 358 373 d|289 350 353 367 d|298 327 352 371 u|274 321 337 355 u|211 247 328 340 u|208 247 259 266 u|240 256 289 312 d|247 292 295 317 d|216 284 304 311 u|216 247 283 317 u|182 196 243 303 u|133 170 204 229 u|118 172 207 220 d|172 185 210 225 u|73 140 183 192 u|103 145 207 228 d|200 211 267 285 d|205 214 272 282 u|166 223 270 273 d|272 283 346 376 d|326 350 391 407 d|319 330 388 410 u|317 320 388 405 d|310 318 411 426 u|280 299 319 352 u|292 299 320 349 d|244 259 325 331 u|220 259 314 335 d|308 320 415 451 d|317 393 417 419 u|356 395 407 437 d|377 411 452 453 d|377 383 459 487 u|335 345 382 410 u|314 353 395 426 d|374 398 418 424 d|389 413 470 475 d|423 456 463 506 u|410 452 497 503 d|452 455 496 555 u|443 461 527 543 d|410 441 527 531 u|419 455 551 552 d|473 477 551 567 u|458 482 500 539 d|450 453 506 527 u|383 405 459 461 u|368 398 412 424 u|374 392 479 494 d|441 474 481 491 u|440 450 480 506 u|461 470 515 518 d|492 502 511 533 u|481 504 515 536 d|492 516 560 563 d|543 556 575 590 d|564 572 614 626 d|567 583 622 624 u|570 585 597 641 d|590 597 706 714 d|669 698 710 725 u|663 682 702 711 u|666 684 753 755 d|715 734 755 758 u|705 737 759 780 d|739 757 766 792 d|702 710 765 768 u|690 695 710 759 u|659 667 702 755 u|666 681 700 717 d|706 712 762 763 d|697 745 762 780 u|636 688 720 741 d|681 718 791 843 d|777 802 847 864 d|801 820 843 879 u|771 809 828 831 u|651 749 807 810 u|736 757 792 795 d|760 790 828 834 d|799 811 828 852 u|691 701 819 852 u|657 703 762 768 d|715 728 771 774 u|709 721 786 825 d|727 755 783 816 u|684 748 834 843 d|795 829 836 838 u|808 827 836 898 u|792 841 846 864 d|825 847 989 1018 d|920 983 1115 1151 d|1061 1102 1154 1169 u|1016 1101 1160 1162 d|1125 1155 1176 1196 d|1136 1179 1184 1223 d|1167 1173 1294 1300 d|1251 1297 1330 1351 d|1317 1333 1404 1480 d|1257 1304 1413 1414 u|1185 1240 1304 1312 u|1189 1209 1246 1317 u|1189 1206 1300 1314 d|1275 1303 1314 1362 d|1305 1308 1368 1401 d|1155 1180 1371 1389 u|1107 1188 1300 1314 d|1265 1270 1295 1396 u|1265 1279 1410 1423 d|1330 1339 1410 1450 u` },
  { top: 600, scale: 2.119, bars: `983 1107 1223 1258 u|979 1119 1156 1203 d|1136 1183 1258 1283 d|1183 1242 1317 1338 d|1230 1281 1418 1440 u|1164 1226 1354 1359 u|1191 1250 1488 1494 d|1305 1336 1486 1494 u|1237 1332 1389 1440 d|1314 1336 1396 1478 u|1230 1306 1336 1381 u|1128 1133 1306 1393 u|945 1124 1138 1147 u|975 1031 1142 1143 u|1017 1021 1033 1152 d|1012 1039 1109 1128 d|957 1003 1126 1203 u|921 984 1012 1046 u|937 946 985 1046 u|866 954 1024 1041 d|999 1020 1207 1230 d|1140 1213 1275 1283 d|1230 1264 1270 1376 d|1246 1280 1352 1376 d|1330 1377 1414 1444 d|1332 1370 1418 1431 u|1136 1196 1376 1414 u|1107 1175 1206 1235 u|1073 1090 1180 1190 u|949 1026 1105 1107 u|958 1014 1067 1080 u|826 832 998 1071 u|636 684 855 923 u|568 677 783 829 d|671 739 787 804 u|610 641 744 830 u|407 565 652 677 u|465 577 597 640 d|373 429 537 558 u|407 438 591 643 d|461 573 604 684 u|390 535 581 591 u|352 408 528 537 u|266 281 413 486 u|180 217 279 338 u` }
];

// RSI vertices: x, y
const rsi = [
  { left: 0, pts: "11,362 20,342 31,402 38,372 54,336 63,366 72,362 82,372 97,332 106,328 118,300 135,282 150,278 160,296 169,282 179,330 190,332 198,334 204,350 212,290 220,312 234,312 247,266 257,326 265,346 280,348 291,366 300,354 308,352 317,326 327,358 335,398 344,354 351,362 362,398 368,396 378,344 387,360 395,344 407,392 418,396 430,394 439,388 446,396 457,434 474,442 484,464 500,440 508,398 516,420 526,400 535,420 543,364 553,396 561,386 569,396 578,388 586,390 594,412 604,412 612,428 630,446 640,466 648,446 656,466 666,420 674,424 683,432 697,418 702,430 712,470 726,488 736,464 744,424 753,444 762,428 771,408 780,406 787,374 796,346 804,368 814,384 822,346 830,346 839,324 849,364 858,372 870,370 884,336 892,336 900,352 910,324 926,316 936,330 945,284 955,250 963,222 970,202 979,288 988,258 997,250 1006,258 1014,250 1024,276 1033,326 1041,336 1056,312 1065,310 1075,346 1089,348 1095,338 1103,336 1111,312 1119,314 1128,330 1146,328 1155,304 1170,284 1180,304 1187,300 1196,278 1206,324 1215,346 1222,326 1232,354 1240,386 1249,402 1257,376 1266,396 1276,356 1292,364 1300,340 1311,364 1320,402 1328,392 1344,414 1352,384 1361,362 1370,380 1378,386 1387,406 1398,408 1406,420 1414,402 1424,426 1432,382 1440,422 1448,390 1459,388 1475,346 1483,348 1492,378 1500,376 1509,368 1519,396 1529,396 1537,404 1545,418 1563,432" },
  { left: 1440, pts: "3,414 11,420 22,464 30,462 37,446 48,474 56,460 64,466 76,464 83,426 100,396 117,440 134,410 152,464 161,442 170,432 178,392 196,428 206,412 212,350 222,378 230,362 238,386 247,374 256,402 274,402 282,410 293,470 299,490 308,488 318,502 332,506 344,532 352,538 360,548 370,472 378,450 386,434 395,458 403,462 413,474 421,384 431,424 438,412 448,438 465,392 474,396 490,426 500,424 508,402 517,450 526,412 538,412 552,398 561,348 570,348 580,330 587,330 596,348 605,324 621,314 631,344 640,392 655,398 664,418 674,428 683,414 692,360 700,358 708,332 718,318 726,314 736,262 742,250 754,276 762,270 770,252 778,242 788,250 796,230 807,282 818,278 828,256 838,230 848,222" }
];

const RED = "#ff2a1a", BLUE = "#2440ff", GREEN = "#4cbb85", PURPLE = "#96289a";

// Window edges
rect(0, 96, 2880, 1482, "#fff");
rect(0, 96, 3, 1482, "#a8a8a6");
rect(3, 96, 2, 1482, "#5a5a5a");
rect(2875, 96, 3, 1482, "#dedbd3");
rect(0, 1576, 2880, 2, "#dedbd3");

// Zones
rect(538, 650, 2104, 12, GREEN);
rect(498, 707, 2096, 29, GREEN);
rect(2178, 686, 160, 9, GREEN);

// Order levels
line(10, 630, 2786, 630, "#ff6a2a", 2, { "stroke-dasharray": "18 12 6 12" });
line(10, 695, 1914, 695, "#1f9a2a", 2, { "stroke-dasharray": "18 12 6 12" });

// Bars
let n = 0;
let wicks = "", up = "", down = "";
for (const s of segments) {
  for (const row of s.bars.split("|")) {
    const p = row.split(" ");
    const [h, t, b, l] = p.slice(0, 4).map(v => Math.round(s.top + v / s.scale));
    const x = 11 + 8 * n++;
    wicks += `M${x} ${h}V${t}M${x} ${b}V${l}`;
    if (p[4] === "u") up += `M${x - 2} ${t + 1}h4V${b - 1}h-4z`;
    else down += `M${x - 3} ${t}h6V${Math.max(b, t + 3)}h-6z`;
  }
}
add("path", { d: wicks, stroke: "#000", "stroke-width": 2 });
add("path", { d: up, stroke: "#000", "stroke-width": 2, fill: "#fff" });
add("path", { d: down, fill: "#000" });

// Fibonacci levels
[[305, "100.0", 299, 43], [686, "61.8", 679, 36], [805, "50.0", 800, 36], [923, "38.2", 918, 36], [1069, "23.6", 1064, 36], [1305, "0.0", 1299, 25]].forEach(([y, t, ty, w]) => {
  line(890, y, 2791, y, "#1c1c1c");
  label(2788 - w, ty, t, "#111", w);
});
line(891, 305, 1919, 1305, "#808080", 1.5, { "stroke-dasharray": "3 1" });
add("path", { d: "M1919 1305L2018 1009L2059 1281M2171 786L2187 914", fill: "none", stroke: "#707070", "stroke-width": 2, "stroke-dasharray": "8 2" });

[[695, "200%", 689, 48], [807, "FE 161.8", 802, 76], [841, "150%", 836, 48], [875, "138.2%", 870, 64], [919, "123.6%", 914, 64], [987, "FE 100.0", 981, 76], [1099, "FE 61.8", 1094, 66]].forEach(([y, t, ty, w]) => {
  line(1914, y, 2788, y, PURPLE);
  label(2791 - w, ty, t, PURPLE, w);
});
rect(2168, 682, 162, 4, "#000");
rect(2168, 734, 162, 4, "#000");
label(2283, 679, "161.8", "#111", 43);
label(2299, 732, "127", "#111", 28);

// Price lines and channel
line(10, 703, 2791, 703, "#c6c6c6");
[563, 649, 707].forEach(y => line(10, y, 2791, y, RED));
line(313, 102, 2791, 815, BLUE);
line(9, 764, 2026, 1334, BLUE);

// Header
add("path", { d: "M15 113h14l-7 8z", fill: "#000" });
label(39, 123, "EURGBP,Weekly", "#111", 143);
label(195, 123, "0.80149 0.81049 0.79598 0.80677", "#111", 282);
label(22, 626, "#11393838 sl", "#111", 111);
label(22, 690, "#11393838 sell limit 0.01", "#111", 207);
add("path", { d: "M2222 102h18l-9 10z", fill: "#c8c8c8" });

// Clock and account
[["Next", "77:08:25", 0, "#d8369a"], ["Sydney", "01:51", 2], ["Tokyo", "00:51", 3], ["EuropeUnion", "17:51", 4], ["London", "16:51", 5], ["NewYork", "11:51", 6, "#d8369a"], ["Equity", "1057.15", 8], ["Free", "1000.82", 9], ["Total", "0.04", 10], ["3 %", "30 $", 11, "#1c9a28"]].forEach(([a, b, k, c = "#5a8cec"]) => {
  const y = 146 + 26 * k;
  for (const [x, t] of [[2472, a], [2759 - 16 * b.length, b]]) {
    add("text", { x, y, fill: c, class: "info", textLength: 16 * t.length }, t);
  }
});
add("text", { x: 2617, y: 406, fill: "#5a8cec", class: "info" }, "4");

// Frames
add("path", { d: "M9 1335V101H2791V1335zM9 1339H2791V1537H9z", fill: "none", stroke: "#222626", "stroke-width": 2.5 });

// Price axis
["0.91220", "0.89960", "0.88735", "0.87510", "0.86250", "0.85025", "0.83765", "0.82540", "0.81315", "0.80055", "0.78830", "0.77570", "0.76345", "0.75120", "0.73860", "0.72635", "0.71375", "0.70150", "0.68925"].forEach((t, i) => {
  const y = 141 + 66 * i;
  line(2791, y, 2797, y, "#111");
  label(2801, y + 7, t, "#111", 66);
});
rect(2796, 692, 78, 4, "#000");
[[561, "0.83304"], [647, "0.81675"], [705, "0.80594"]].forEach(([y, t]) => {
  rect(2796, y - 11, 78, 22, RED);
  label(2801, y + 7, t, "#fff", 67);
});

// RSI
add("path", {
  d: "M" + rsi.map(s => s.pts.split(" ").map(p => {
    const [x, y] = p.split(",");
    return (s.left + x / 1.0889).toFixed(0) + " " + (1320 + y / 3).toFixed(0);
  }).join("L")).join("L"),
  fill: "none", stroke: RED, "stroke-width": 4.5, "stroke-linejoin": "bevel"
});
[1381, 1401, 1477, 1497].forEach(y => line(10, y, 2790, y, "#bdbdbd"));
label(16, 1364, "RSI(14) 73.1307", "#111", 137);
label(2797, 1359, "100", "#111", 29);
rect(2797, 1370, 19, 41, "#bdbdbd");
rect(2797, 1466, 19, 42, "#bdbdbd");
[[1388, "80"], [1408, "70"], [1483, "30"], [1503, "20"]].forEach(([y, t]) => label(2797, y, t, "#fff", 19));
label(2797, 1529, "0");

// Dates
[["19 Dec 2010", 104], ["10 Apr 2011", 101], ["31 Jul 2011", 95], ["20 Nov 2011", 108], ["11 Mar 2012", 105], ["1 Jul 2012", 84], ["21 Oct 2012", 104], ["10 Feb 2013", 103], ["2 Jun 2013", 90], ["22 Sep 2013", 104], ["12 Jan 2014", 100], ["4 May 2014", 100], ["24 Aug 2014", 108], ["14 Dec 2014", 104], ["5 Apr 2015", 92], ["26 Jul 2015", 97], ["15 Nov 2015", 109], ["6 Mar 2016", 94]].forEach(([t, w], i) => {
  line(11 + 128 * i, 1538, 11 + 128 * i, 1544, "#111");
  label(8 + 128 * i, 1562, t, "#111", w);
});

// Connection bars
let green = "", blue = "";
for (let i = 0; i < 9; i++) {
  const x = 2 + i * 5.3;
  const y = 19 - i * 2;
  green += `M${x} 0V${y - 1}`;
  blue += `M${x} ${y + 2}V28`;
}
document.getElementById("net").innerHTML = `<path d="${green}" stroke="#7b8a1c" stroke-width="3"/><path d="${blue}" stroke="#1f5f86" stroke-width="3"/>`;

// Letter spacing of the captions
document.querySelectorAll("[data-w]").forEach(el => {
  const r = document.createRange();
  r.selectNodeContents(el);
  const w = r.getBoundingClientRect().width;
  el.style.letterSpacing = ((el.dataset.w - w) / el.textContent.length).toFixed(2) + "px";
});
```
